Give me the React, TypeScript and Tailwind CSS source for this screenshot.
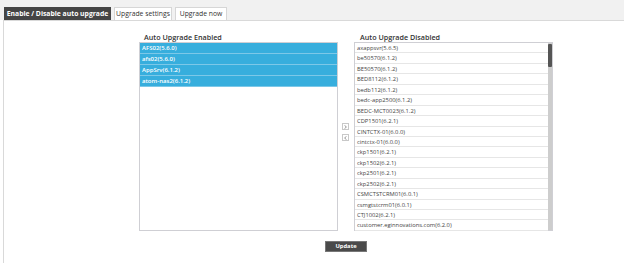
import React from "react";

const enabled = ["AFS02(5.6.0)", "afs02(5.6.0)", "AppSrv(6.1.2)", "atom-nas2(6.1.2)"];
const disabled = [
  "axappsvr(5.6.5)",
  "be50570(6.1.2)",
  "BE50570(6.1.2)",
  "BED8112(6.1.2)",
  "bedb112(6.1.2)",
  "bedc-app2500(6.1.2)",
  "BEDC-MCT0023(6.1.2)",
  "CDP1501(6.2.1)",
  "CINTCTX-01(6.0.0)",
  "cintctx-01(6.0.0)",
  "ckp1501(6.2.1)",
  "ckp1502(6.2.1)",
  "ckp2501(6.2.1)",
  "ckp2502(6.2.1)",
  "CSMCTSTCRM01(6.0.1)",
  "csmgtstcrm01(6.0.1)",
  "CTJ1002(6.2.1)",
  "customer.eginnovations.com(6.2.0)",
];

export default function App() {
  return (
    <div
      className="w-[624px] h-[263px] bg-white overflow-hidden"
      style={{ fontFamily: '"Open Sans", "Liberation Sans", sans-serif' }}
    >
      <div className="h-[20px] bg-[#f1f1f1] pt-[7px] pl-[4px] flex gap-[3px]">
        <div className="h-[13px] w-[107px] bg-[#454545] text-white font-bold text-[6.8px] leading-[13px] text-center">
          Enable / Disable auto upgrade
        </div>
        <div className="h-[13px] w-[58px] bg-white border border-[#d6d6d6] border-b-0 text-[#333] text-[6.8px] leading-[12px] text-center">
          Upgrade settings
        </div>
        <div className="h-[13px] w-[52px] bg-white border border-[#d6d6d6] border-b-0 text-[#333] text-[6.8px] leading-[12px] text-center">
          Upgrade now
        </div>
      </div>
      <div className="ml-[3px] h-[243px] border-l border-t border-[#d9d9d9]">
        <div className="flex pl-[135px] pt-[11px]">
          <div className="w-[199px]">
            <div className="h-[10px] pl-[5px] text-[7.2px] leading-[10px] font-semibold text-[#333]">
              Auto Upgrade Enabled
            </div>
            <div className="h-[189px] border border-[#cfcfd4]">
              {enabled.map((e) => (
                <div
                  key={e}
                  className="h-[11px] bg-[#37aedd] border-b border-[#7cc8e8] text-white text-[6px] font-semibold leading-[10px] pl-[2px]"
                >
                  {e}
                </div>
              ))}
            </div>
          </div>
          <div className="w-[16px] pt-[91px] pl-[4px] flex flex-col gap-[4px]">
            <div className="w-[7px] h-[7px] border border-[#c8c8c8] flex items-center justify-center">
              <svg width="3" height="4" viewBox="0 0 3 4">
                <path d="M0.5 0.3 L2.4 2 L0.5 3.7" fill="none" stroke="#666" strokeWidth="0.7" />
              </svg>
            </div>
            <div className="w-[7px] h-[7px] border border-[#c8c8c8] flex items-center justify-center">
              <svg width="3" height="4" viewBox="0 0 3 4">
                <path d="M2.5 0.3 L0.6 2 L2.5 3.7" fill="none" stroke="#666" strokeWidth="0.7" />
              </svg>
            </div>
          </div>
          <div className="w-[199px]">
            <div className="h-[10px] pl-[6px] text-[7.2px] leading-[10px] font-semibold text-[#333]">
              Auto Upgrade Disabled
            </div>
            <div className="h-[189px] border border-[#cfcfd4] flex">
              <div className="flex-1">
                {disabled.map((e) => (
                  <div
                    key={e}
                    className="h-[10.45px] border-b border-[#e6e6e6] text-[#444] text-[5.8px] leading-[10px] pl-[2px]"
                  >
                    {e}
                  </div>
                ))}
              </div>
              <div className="w-[4px] bg-[#cdcdcd] pt-[1px]">
                <div className="h-[23px] bg-[#555] rounded-[1px]" />
              </div>
            </div>
          </div>
        </div>
        <div className="flex pl-[321px] pt-[10px]">
          <div className="w-[42px] h-[11px] bg-[#4a4a4a] border border-[#777] text-white text-[5.8px] font-bold leading-[9px] text-center">
            Update
          </div>
        </div>
      </div>
    </div>
  );
}
